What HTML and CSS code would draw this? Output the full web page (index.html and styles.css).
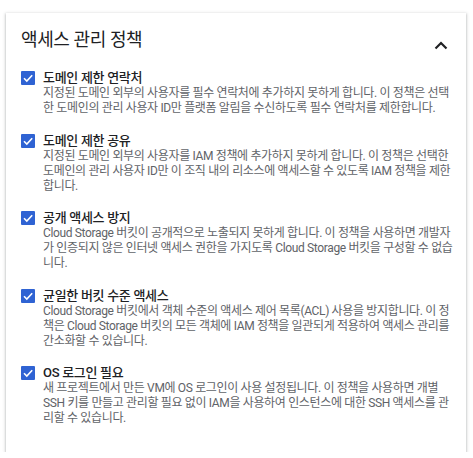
FILE: index.html
```html
<!DOCTYPE html>
<html lang="ko">
<head>
    <meta charset="utf-8">
    <title>액세스 관리 정책</title>
    <link rel="stylesheet" href="styles.css">
</head>
<body>
    <div class="card">
        <div class="card-head">
            <h1>액세스 관리 정책</h1>
            <svg class="chevron" width="14" height="9" viewBox="0 0 14 9">
                <path d="M1.5 7.5 L7 2 L12.5 7.5" fill="none" stroke="#202124" stroke-width="2.2"/>
            </svg>
        </div>

        <div class="policy">
            <span class="check"><svg width="14" height="14" viewBox="0 0 14 14"><path d="M3 7.2 L5.8 10 L11.2 4.2" fill="none" stroke="#fff" stroke-width="1.6"/></svg></span>
            <div class="text">
                <div class="name">도메인 제한 연락처</div>
                <div class="desc">지정된 도메인 외부의 사용자를 필수 연락처에 추가하지 못하게 합니다. 이 정책은 선택한 도메인의 관리 사용자 ID만 플랫폼 알림을 수신하도록 필수 연락처를 제한합니다.</div>
            </div>
        </div>

        <div class="policy">
            <span class="check"><svg width="14" height="14" viewBox="0 0 14 14"><path d="M3 7.2 L5.8 10 L11.2 4.2" fill="none" stroke="#fff" stroke-width="1.6"/></svg></span>
            <div class="text">
                <div class="name">도메인 제한 공유</div>
                <div class="desc">지정된 도메인 외부의 사용자를 IAM 정책에 추가하지 못하게 합니다. 이 정책은 선택한 도메인의 관리 사용자 ID만 이 조직 내의 리소스에 액세스할 수 있도록 IAM 정책을 제한합니다.</div>
            </div>
        </div>

        <div class="policy">
            <span class="check"><svg width="14" height="14" viewBox="0 0 14 14"><path d="M3 7.2 L5.8 10 L11.2 4.2" fill="none" stroke="#fff" stroke-width="1.6"/></svg></span>
            <div class="text">
                <div class="name">공개 액세스 방지</div>
                <div class="desc">Cloud Storage 버킷이 공개적으로 노출되지 못하게 합니다. 이 정책을 사용하면 개발자가 인증되지 않은 인터넷 액세스 권한을 가지도록 Cloud Storage 버킷을 구성할 수 없습니다.</div>
            </div>
        </div>

        <div class="policy">
            <span class="check"><svg width="14" height="14" viewBox="0 0 14 14"><path d="M3 7.2 L5.8 10 L11.2 4.2" fill="none" stroke="#fff" stroke-width="1.6"/></svg></span>
            <div class="text">
                <div class="name">균일한 버킷 수준 액세스</div>
                <div class="desc">Cloud Storage 버킷에서 객체 수준의 액세스 제어 목록(ACL) 사용을 방지합니다. 이 정책은 Cloud Storage 버킷의 모든 객체에 IAM 정책을 일관되게 적용하여 액세스 관리를 간소화할 수 있습니다.</div>
            </div>
        </div>

        <div class="policy">
            <span class="check"><svg width="14" height="14" viewBox="0 0 14 14"><path d="M3 7.2 L5.8 10 L11.2 4.2" fill="none" stroke="#fff" stroke-width="1.6"/></svg></span>
            <div class="text">
                <div class="name">OS 로그인 필요</div>
                <div class="desc">새 프로젝트에서 만든 VM에 OS 로그인이 사용 설정됩니다. 이 정책을 사용하면 개별 SSH 키를 만들고 관리할 필요 없이 IAM을 사용하여 인스턴스에 대한 SSH 액세스를 관리할 수 있습니다.</div>
            </div>
        </div>
    </div>
</body>
</html>
```

FILE: styles.css
```css
body {
    margin: 0;
    padding: 13px 6px 0 6px;
    background: #ffffff;
    font-family: Roboto, "Noto Sans CJK KR", sans-serif;
    color: #202124;
}

.card {
    width: 460px;
    height: 439px;
    box-sizing: border-box;
    padding: 15px 10px 0 15px;
    background: #ffffff;
    box-shadow: 0 1px 2px rgba(60, 64, 67, 0.3), 0 1px 3px 1px rgba(60, 64, 67, 0.15);
}

.card-head {
    display: flex;
    justify-content: space-between;
    align-items: flex-start;
    margin-bottom: 18px;
}

h1 {
    margin: 0;
    font-size: 18px;
    font-weight: 400;
    line-height: 24px;
    letter-spacing: -0.4px;
}

.chevron {
    margin-top: 13px;
    margin-right: 8px;
}

.policy {
    display: flex;
    align-items: flex-start;
    gap: 8px;
    margin-bottom: 16.5px;
}

.check {
    flex: none;
    width: 14px;
    height: 14px;
    margin-top: 1px;
    border-radius: 1px;
    background: #2f63d3;
    display: flex;
}

.name {
    font-size: 13px;
    line-height: 16px;
    font-weight: 500;
    letter-spacing: -0.3px;
    color: #202124;
}

.desc {
    font-size: 12px;
    line-height: 15px;
    color: #5f6368;
    letter-spacing: -0.35px;
}
```
